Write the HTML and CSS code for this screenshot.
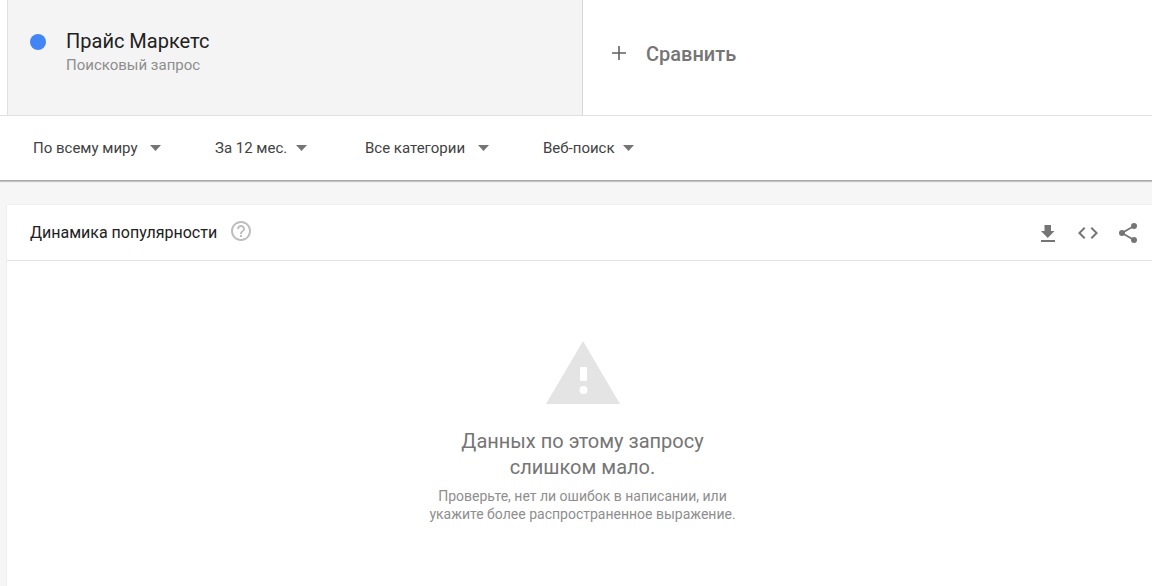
FILE: index.html
```html
<!DOCTYPE html>
<html lang="ru">
<head>
    <meta charset="UTF-8">
    <meta name="viewport" content="width=device-width, initial-scale=1.0">
    <title>Прайс Маркетс - Динамика популярности</title>
    <link rel="stylesheet" href="styles.css">
</head>
<body>
    <header class="explore-header">
        <div class="terms">
            <div class="term">
                <span class="term-dot"></span>
                <div>
                    <h1 class="term-title">Прайс Маркетс</h1>
                    <p class="term-type">Поисковый запрос</p>
                </div>
            </div>
            <button type="button" class="compare">
                <svg class="compare-icon" width="16" height="16" viewBox="0 0 16 16" aria-hidden="true">
                    <path d="M8 0v14M1 7h14" fill="none" stroke="currentColor" stroke-width="1.6"/>
                </svg>
                Сравнить
            </button>
        </div>

        <form class="filters">
            <div class="filter">
                <select class="filter-select" aria-label="Регион">
                    <option>По всему миру</option>
                </select>
                <svg class="filter-arrow" width="11" height="6" viewBox="0 0 11 6" aria-hidden="true"><path d="M0 0h11L5.5 6z"/></svg>
            </div>
            <div class="filter filter-narrow">
                <select class="filter-select" aria-label="Период">
                    <option>За 12 мес.</option>
                </select>
                <svg class="filter-arrow" width="11" height="6" viewBox="0 0 11 6" aria-hidden="true"><path d="M0 0h11L5.5 6z"/></svg>
            </div>
            <div class="filter">
                <select class="filter-select" aria-label="Категория">
                    <option>Все категории</option>
                </select>
                <svg class="filter-arrow" width="11" height="6" viewBox="0 0 11 6" aria-hidden="true"><path d="M0 0h11L5.5 6z"/></svg>
            </div>
            <div class="filter filter-narrow">
                <select class="filter-select" aria-label="Тип поиска">
                    <option>Веб-поиск</option>
                </select>
                <svg class="filter-arrow" width="11" height="6" viewBox="0 0 11 6" aria-hidden="true"><path d="M0 0h11L5.5 6z"/></svg>
            </div>
        </form>
    </header>

    <main class="widget">
        <div class="widget-header">
            <h2 class="widget-title">Динамика популярности</h2>
            <button type="button" class="icon-button help" aria-label="Справка">
                <svg width="24" height="24" viewBox="0 0 24 24" fill="currentColor"><path d="M11 18h2v-2h-2v2zm1-16C6.48 2 2 6.48 2 12s4.480 10 10 10 10-4.480 10-10S17.520 2 12 2zm0 18c-4.410 0-8-3.590-8-8s3.590-8 8-8 8 3.590 8 8-3.590 8-8 8zm0-14c-2.210 0-4 1.790-4 4h2c0-1.100.9-2 2-2s2 .9 2 2c0 2-3 1.750-3 5h2c0-2.250 3-2.500 3-5 0-2.210-1.790-4-4-4z"/></svg>
            </button>
            <div class="widget-actions">
                <button type="button" class="icon-button" aria-label="Скачать">
                    <svg width="24" height="24" viewBox="0 0 24 24" fill="currentColor"><path d="M18.500 10H15V4H8.500v6H5l6.750 7zM5 19v2h14v-2H5z"/></svg>
                </button>
                <button type="button" class="icon-button" aria-label="Встроить">
                    <svg width="24" height="24" viewBox="0 0 24 24" fill="currentColor"><path d="M9.400 16.600L4.800 12l4.600-4.600L8 6l-6 6 6 6 1.400-1.400zm5.200 0l4.600-4.600-4.600-4.600L16 6l6 6-6 6-1.400-1.400z"/></svg>
                </button>
                <button type="button" class="icon-button" aria-label="Поделиться">
                    <svg width="24" height="24" viewBox="0 0 24 24" fill="currentColor">
                        <path d="M18 5L6 12l12 7" fill="none" stroke="currentColor" stroke-width="1.8"/>
                        <circle cx="18" cy="5" r="3"/>
                        <circle cx="6" cy="12" r="3"/>
                        <circle cx="18" cy="19" r="3"/>
                    </svg>
                </button>
            </div>
        </div>

        <div class="empty">
            <svg class="empty-icon" width="74" height="63" viewBox="0 0 74 63" aria-hidden="true">
                <path d="M37 0l37 63H0z" fill="#e4e4e4"/>
                <rect x="34" y="26" width="7" height="14" rx="1" fill="#fff"/>
                <circle cx="37.5" cy="49" r="4" fill="#fff"/>
            </svg>
            <p class="empty-title">Данных по этому запросу<br>слишком мало.</p>
            <p class="empty-hint">Проверьте, нет ли ошибок в написании, или<br>укажите более распространенное выражение.</p>
        </div>
    </main>
</body>
</html>
```
FILE: styles.css
```css
* {
    box-sizing: border-box;
}

body {
    margin: 0;
    min-height: 100vh;
    display: flex;
    flex-direction: column;
    font-family: Roboto, "Liberation Sans", sans-serif;
    color: #212121;
    background-color: #f6f6f6;
}

h1, h2, p {
    margin: 0;
    font-weight: 400;
}

button, select {
    font-family: inherit;
    border: none;
    background: none;
    padding: 0;
    cursor: pointer;
}

.explore-header {
    background-color: #fff;
    border-bottom: 1px solid #a8a8a8;
    box-shadow: 0 1px 1px rgba(0, 0, 0, 0.2);
}

.terms {
    display: flex;
    padding-left: 7px;
    border-bottom: 1px solid #e0e0e0;
}

.term {
    display: flex;
    gap: 20px;
    width: 576px;
    padding: 29px 22px 38px;
    background-color: #f4f4f4;
    border-left: 1px solid #e0e0e0;
    border-right: 1px solid #d8d8d8;
}

.term-dot {
    width: 16px;
    height: 16px;
    margin-top: 5px;
    border-radius: 50%;
    background-color: #4285f4;
}

.term-title {
    font-size: 20px;
    line-height: 24px;
}

.term-type {
    font-size: 15px;
    line-height: 24px;
    color: #8e8e8e;
}

.compare {
    display: flex;
    flex: 1;
    align-items: center;
    gap: 19px;
    padding: 0 28px 8px;
    font-size: 20px;
    font-weight: 500;
    color: #757575;
}

.compare-icon {
    color: #616161;
}

.filters {
    display: grid;
    grid-template-columns: 182px 150px 178px auto;
    padding: 20px 33px;
}

.filter {
    display: flex;
    align-items: center;
    gap: 12px;
    height: 24px;
}

.filter-narrow {
    gap: 8px;
}

.filter-select {
    appearance: none;
    font-size: 15px;
    line-height: 24px;
    color: #424242;
}

.filter-arrow {
    fill: #757575;
}

.widget {
    flex: 1;
    margin: 24px 0 0 7px;
    background-color: #fff;
    box-shadow: 0 0 1px rgba(0, 0, 0, 0.2);
}

.widget-header {
    display: flex;
    align-items: center;
    height: 56px;
    padding: 0 12px 0 23px;
    border-bottom: 1px solid #e4e4e4;
}

.widget-title {
    font-size: 16px;
    line-height: 24px;
}

.icon-button {
    display: flex;
    color: #757575;
}

.help {
    margin-left: 12px;
    padding-bottom: 3px;
    color: #bdbdbd;
}

.widget-actions {
    display: flex;
    gap: 16px;
    margin-left: auto;
}

.empty {
    display: flex;
    flex-direction: column;
    align-items: center;
    padding: 80px 0 60px 6px;
    text-align: center;
}

.empty-title {
    margin-top: 24px;
    font-size: 20px;
    line-height: 26px;
    color: #757575;
}

.empty-hint {
    margin-top: 7px;
    font-size: 14px;
    line-height: 18px;
    color: #8e8e8e;
}
```
